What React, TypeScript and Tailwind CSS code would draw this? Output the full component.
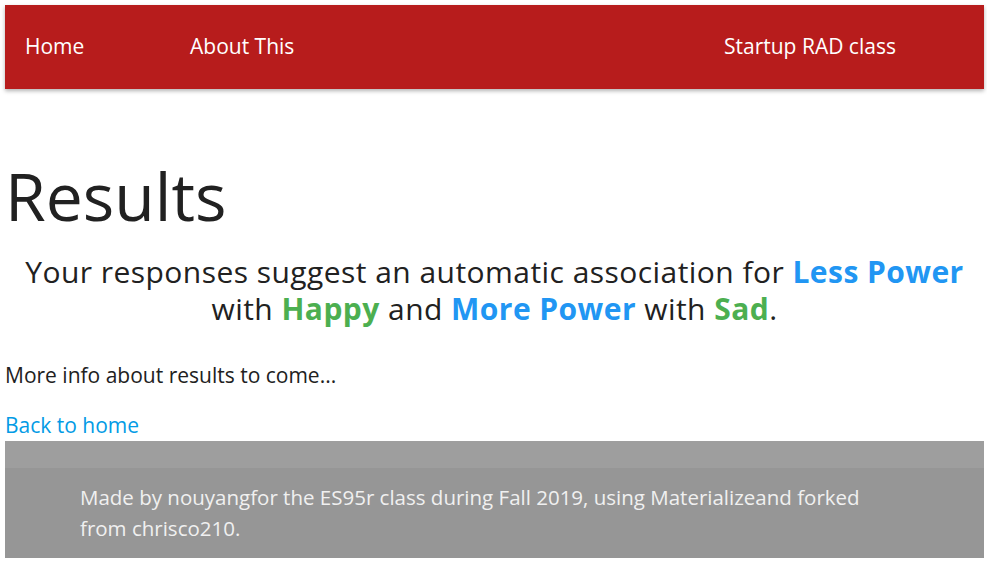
import React from "react";

export default function App() {
  return (
    <div className="min-h-[564px] bg-white px-[5px] pt-[5px] text-[#212121]" style={{ fontFamily: '"Open Sans", sans-serif' }}>
      <nav className="flex h-[84px] w-[979px] items-center bg-[#b71c1c] text-[21px] text-white shadow-[0_2px_4px_rgba(0,0,0,0.3)]">
        <div className="w-[185px] pl-[20px]">Home</div>
        <div className="w-[534px]">About This</div>
        <div>Startup RAD class</div>
      </nav>
      <main className="w-[979px]">
        <h1 className="mt-[66px] text-[66px] leading-[80px]">Results</h1>
        <p className="mt-[18px] text-center text-[30px] leading-[37px] tracking-[0.45px]">
          Your responses suggest an automatic association for{" "}
          <span className="font-bold text-[#2196f3]">Less Power</span> with{" "}
          <span className="font-bold text-[#4caf50]">Happy</span> and{" "}
          <span className="font-bold text-[#2196f3]">More Power</span> with{" "}
          <span className="font-bold text-[#4caf50]">Sad</span>.
        </p>
        <p className="mt-[33px] text-[21px] leading-[30px]">More info about results to come...</p>
        <p className="mt-[20px] text-[21px] leading-[31px] text-[#039be5]">Back to home</p>
      </main>
      <footer className="w-[979px] bg-[#9e9e9e]">
        <div className="h-[27px]" />
        <div className="h-[90px] bg-[#969696] px-[75px] pt-[14px] text-[20.5px] leading-[31px] text-[#f0f0f0]">
          <div className="w-[800px]">
            Made by nouyangfor the ES95r class during Fall 2019, using Materializeand forked from chrisco210.
          </div>
        </div>
      </footer>
    </div>
  );
}
